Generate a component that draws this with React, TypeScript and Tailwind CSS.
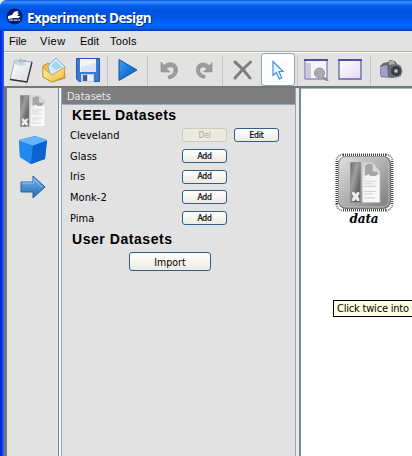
import type { ReactNode } from 'react';

function DatasetIcon({ className }: { className: string }) {
  return (
    <svg viewBox="0 0 26 32" className={className} preserveAspectRatio="none">
      <defs>
        <linearGradient id="strip" x1="0" y1="0" x2="1" y2="1">
          <stop offset="0" stopColor="#6c6c6c" />
          <stop offset=".35" stopColor="#a0a0a0" />
          <stop offset=".7" stopColor="#666" />
          <stop offset="1" stopColor="#777" />
        </linearGradient>
        <linearGradient id="sheet" x1="0" y1="0" x2=".6" y2="1">
          <stop offset="0" stopColor="#cfcfcf" />
          <stop offset=".4" stopColor="#f2f2f2" />
          <stop offset="1" stopColor="#fafafa" />
        </linearGradient>
      </defs>
      <rect x=".5" y=".5" width="8.5" height="31" fill="url(#strip)" stroke="#8c8c8c" strokeWidth=".6" />
      <path d="M1.800 23.500h1.700l1.300 1.500 1.300-1.500h1.700v1.800l-1.200 1.500 1.200 1.700v2H6.100l-1.300-1.500-1.300 1.500H1.800v-2L3 26.800l-1.200-1.500z" fill="#eee" />
      <path d="M10.500 .5H19l6 7v24H10.500z" fill="url(#sheet)" stroke="#d5d5d5" strokeWidth=".5" />
      <path d="M12.500 3q4-3 6.500-1l1 5 4.500 1.500-3 2.500h-4l-2-1.500-3 1.500z" fill="#a6a6a6" />
      <path d="M19 .5v7h6z" fill="#dcdcdc" stroke="#b5b5b5" strokeWidth=".4" />
      <path d="M12 15h10M12 17h7M12 19h10M12 23h10M12 25h7M12 28h9" stroke="#d2d2d2" strokeWidth=".9" />
    </svg>
  );
}

function Sep({ className }: { className: string }) {
  return (
    <div className={`flex h-full shrink-0 justify-center ${className}`}>
      <div className="mt-[3px] h-[30px] w-px bg-[#c9c6b8]" />
    </div>
  );
}

function Cell({ className, children }: { className: string; children: ReactNode }) {
  return <div className={`flex h-full shrink-0 items-center justify-center ${className}`}>{children}</div>;
}

function Toolbar() {
  return (
    <div className="flex h-[34px] w-full shrink-0 items-center overflow-hidden border-t border-white bg-[#e2e2e2]">
      <Cell className="w-[33px]">
        <svg width="26" height="26" viewBox="0 0 26 26">
          <defs>
            <linearGradient id="pg" x1="0" y1="0" x2="1" y2="1"><stop stopColor="#fff" /><stop offset="1" stopColor="#d8dbe0" /></linearGradient>
          </defs>
          <path d="M7 3l17 2-5 20L2 22z" fill="url(#pg)" stroke="#aaa" />
          <path d="M24 5l-5 20L2 22.500" fill="none" stroke="#333" strokeWidth="1.300" />
          <path d="M7 3l9 1 2 4-6 1-5-2z" fill="#c5d9e8" />
          <path d="M12 1l2 3 4 0M10 3l3 3" stroke="#86a6bf" fill="none" />
        </svg>
      </Cell>
      <Cell className="w-[33px]">
        <svg width="26" height="26" viewBox="0 0 26 26">
          <defs>
            <linearGradient id="fold" x1="0" y1="0" x2="1" y2="1"><stop stopColor="#fff6ac" /><stop offset="1" stopColor="#eeb83a" /></linearGradient>
          </defs>
          <path d="M2 9l5-3 4 3 12 1 1 11-13 4-9-5z" fill="#eec04a" stroke="#b98a22" />
          <path d="M7 9l8-8 9 9-7 10-8-3z" fill="#d3edfa" stroke="#79b4d5" />
          <path d="M10 9l5-5 6 6-6 3z" fill="#a3d5ef" />
          <path d="M2 11l9 7 13-8-1 10-12 5-9-5z" fill="url(#fold)" stroke="#c9962a" strokeWidth=".8" />
        </svg>
      </Cell>
      <Cell className="w-[35px]">
        <svg width="24" height="24" viewBox="0 0 24 24">
          <path d="M.500.500h23v23H3l-2.500-2.500z" fill="#3d78d3" stroke="#2458ab" />
          <path d="M4 1h16v13H4z" fill="#f3f5fb" />
          <path d="M5 9l15-4v9H5z" fill="#dce2f1" />
          <path d="M5 16h13v8H5z" fill="#c7d0e0" />
          <path d="M7 17h4v6H7z" fill="#345e9d" />
          <path d="M12 17h5v6h-5z" fill="#eef0f5" />
        </svg>
      </Cell>
      <Sep className="w-[4px]" />
      <Cell className="w-[37px]">
        <svg width="20" height="24" viewBox="0 0 20 24">
          <defs>
            <linearGradient id="play" x1="0" y1="0" x2="1" y2="1"><stop stopColor="#4b9bec" /><stop offset=".5" stopColor="#1c78dc" /><stop offset="1" stopColor="#0c59b8" /></linearGradient>
          </defs>
          <path d="M1 1.500v21L19 12z" fill="url(#play)" stroke="#14559e" strokeLinejoin="round" />
        </svg>
      </Cell>
      <Sep className="mr-[4px] w-[3px]" />
      <Cell className="w-[34px]">
        <svg width="20" height="20" viewBox="0 0 20 20">
          <path d="M1 2l3 3.500C9 0 18 3 17.500 10c0 5-4 8-8.500 9l-1-3c4-1 6-3 6-6 0-4-5-4-7.500-1.500L10 12H1z" fill="#9c9c9c" stroke="#8a8a8a" strokeWidth=".6" />
        </svg>
      </Cell>
      <Cell className="w-[32px]">
        <svg width="19" height="20" viewBox="0 0 20 20">
          <path d="M19 2l-3 3.500C11 0 2 3 2.500 10c0 5 4 8 8.500 9l1-3c-4-1-6-3-6-6 0-4 5-4 7.500-1.500L10 12h9z" fill="#9c9c9c" stroke="#8a8a8a" strokeWidth=".6" />
        </svg>
      </Cell>
      <Sep className="w-[6px]" />
      <Cell className="w-[36px]">
        <svg width="20" height="20" viewBox="0 0 20 20">
          <path d="M2 2c5 4 10 9 15 16M17.500 2C12 7 7 12 2 18" fill="none" stroke="#7e7e7e" strokeWidth="3" strokeLinecap="round" />
        </svg>
      </Cell>
      <div className="flex h-[33px] w-[34px] shrink-0 items-center justify-center rounded-[3px] border border-[#88a9ac] bg-white">
        <svg width="14" height="21" viewBox="0 0 14 21" className="-ml-px mt-[2px]">
          <path d="M2 1.500v14l3.300-3 3 6.500 2.500-1.200-3-6.300H12z" fill="#eef7ff" stroke="#4290dc" strokeWidth="1.200" />
        </svg>
      </div>
      <Sep className="w-[5px]" />
      <Cell className="w-[33px]">
        <svg width="25" height="22" viewBox="0 0 25 22">
          <path d="M1 1h22v19H1z" fill="#f5f2fa" stroke="#6462ab" />
          <path d="M0 0h24v2H0z" fill="#4e4da5" />
          <path d="M2 4h5v15H2z" fill="#cbcbd5" />
          <circle cx="15.500" cy="14" r="5" fill="#aaa9ae" stroke="#929299" />
          <path d="M19 18l5 4" stroke="#858585" strokeWidth="2" />
        </svg>
      </Cell>
      <Cell className="w-[33px]">
        <svg width="24" height="21" viewBox="0 0 24 21">
          <defs>
            <linearGradient id="win" x1="0" y1="0" x2="1" y2="1"><stop stopColor="#fff" /><stop offset="1" stopColor="#e5d9ee" /></linearGradient>
          </defs>
          <path d="M1 1h22v19H1z" fill="url(#win)" stroke="#6462ab" strokeWidth="1.300" />
          <path d="M0 0h24v2H0z" fill="#4e4da5" />
        </svg>
      </Cell>
      <Sep className="w-[8px]" />
      <Cell className="w-[34px]">
        <svg width="24" height="19" viewBox="0 0 24 19">
          <path d="M1 6l3-3 5-1 2-2 5 1 2 3 4 2v10l-8 2-12-1-1-4z" fill="#676771" />
          <path d="M1 7l7-2 1 12-7-1z" fill="#a3a0cc" />
          <path d="M10 1h5l1 3-6 1z" fill="#aaa" />
          <circle cx="17" cy="11" r="6" fill="#454550" stroke="#858590" />
          <circle cx="17" cy="11" r="3" fill="#8181a0" stroke="#252532" />
          <circle cx="17" cy="11" r="1" fill="#e5e5ee" />
        </svg>
      </Cell>
    </div>
  );
}

const rows = ['Cleveland', 'Glass', 'Iris', 'Monk-2', 'Pima'];

function SmallButton({ label, disabled = false }: { label: string; disabled?: boolean }) {
  const look = disabled
    ? 'border-[#cdccbd] bg-[#ebebe2] text-[#aaa99a]'
    : 'border-[#315f88] bg-gradient-to-b from-white to-[#eceae2] text-black';
  return (
    <button className={`h-[14px] w-[45px] rounded-[3px] border text-center font-['DejaVu_Sans_Condensed',sans-serif] text-[8.500px] leading-[11px] tracking-[-0.2px] ${disabled ? '' : '[-webkit-text-stroke:0.2px_black]'} ${look}`}>
      {label}
    </button>
  );
}

function DataNode() {
  return (
    <div className="flex w-[60px] flex-col items-center">
      <div className="relative h-[59px] w-[59px]">
        <svg width="59" height="59" viewBox="0 0 59 59" className="absolute inset-0">
          <defs>
            <linearGradient id="chip" x1="0" y1="0" x2="1" y2="1"><stop stopColor="#e0e0e0" /><stop offset=".5" stopColor="#b0b0b0" /><stop offset="1" stopColor="#7c7c7c" /></linearGradient>
          </defs>
          <path d="M8 2h43M8 57h43M2 8v43M57 8v43" stroke="#444" strokeWidth="3" strokeDasharray="1 1" />
          <path d="M8 1.500Q2 2 1.500 8M51 1.500Q57 2 57.500 8M1.500 51q.5 6 6.500 6.500M51 57.500q6-.5 6.500-6.500" fill="none" stroke="#777" strokeWidth="2" strokeDasharray="1 1" />
          <rect x="3" y="3" width="53" height="53" rx="8" fill="#777" />
          <rect x="4" y="4" width="50" height="50" rx="7" fill="url(#chip)" stroke="#c4c4c4" />
        </svg>
        <DatasetIcon className="absolute left-[15px] top-[9px] h-[41px] w-[31px]" />
      </div>
      <div className="font-['DejaVu_Serif',serif] text-[12px] font-bold italic leading-[15px] tracking-[-0.1px]">data</div>
    </div>
  );
}

export default function App() {
  return (
    <div className="h-[456px] w-[412px] overflow-hidden bg-[#dcecf7] font-['DejaVu_Sans_Condensed','DejaVu_Sans',sans-serif] text-black">
      <div className="flex h-full flex-col overflow-hidden rounded-tl-[7px] bg-[linear-gradient(90deg,#001fd0_0px,#0030e5_2px,#286bf0_3px,#0758e6_4px)]">
        <header className="flex h-[31px] shrink-0 items-center bg-[linear-gradient(180deg,#0754d5_0px,#3a93ff_2px,#0863ee_5px,#0052df_10px,#0055e5_17px,#0066ff_25px,#0060f6_28px,#003db5_31px)] pl-[6px] pt-[3px]">
          <svg width="17" height="17" viewBox="0 0 17 17" className="-mt-[2px] shrink-0">
            <circle cx="8.500" cy="8.500" r="8" fill="#091b68" />
            <path d="M2 8l4-1 2-3 3-1 2 1-2 1 2 1-2 2h3l-1 2-5 0-6 1z" fill="#fff" />
            <path d="M3 12.200h11" stroke="#bcccf3" strokeWidth="1.300" strokeDasharray="4 .7" />
          </svg>
          <h1 className="ml-[4px] mt-px whitespace-nowrap font-['Open_Sans',sans-serif] text-[13.500px] font-bold leading-[18px] tracking-[-0.53px] text-white [text-shadow:1px_1px_1px_#002477]">Experiments Design</h1>
        </header>
        <div className="ml-[4px] flex min-h-0 flex-1 flex-col bg-[#e2e2e2]">
          <nav className="flex h-[21px] shrink-0 border-b border-[#b2b09f] pt-[2px] font-['Liberation_Sans',sans-serif] text-[11px] leading-[16px]">
            <span className="ml-[5px] w-[31px]">File</span>
            <span className="w-[40px] tracking-[0.5px]">View</span>
            <span className="w-[30px]">Edit</span>
            <span className="tracking-[0.2px]">Tools</span>
          </nav>
          <Toolbar />
          <div className="flex min-h-0 flex-1 border-t-2 border-[#77776f]">
            <aside className="flex w-[54px] shrink-0 flex-col items-center border-l-[3px] border-[#777] bg-[#e2e2e2] pt-[7px]">
              <DatasetIcon className="h-[32px] w-[26px]" />
              <svg width="30" height="30" viewBox="0 0 30 30" className="mt-[8px]">
                <path d="M1 5L17 1l12 4-2 19-14 5L2 22z" fill="#1476e0" />
                <path d="M1 5L17 1l12 4-14 5z" fill="#65b4fa" />
                <path d="M1 5l14 5-2 19-11-7z" fill="#218af0" />
                <path d="M15 10l14-5-2 19-14 5z" fill="#0962cf" />
                <path d="M1 5l14 5 14-5" fill="none" stroke="#91cdff" strokeWidth=".7" />
              </svg>
              <svg width="28" height="24" viewBox="0 0 28 24" className="ml-px mt-[10px]">
                <defs>
                  <linearGradient id="arrow" x1="0" y1="0" x2="0" y2="1"><stop stopColor="#76b6ee" /><stop offset="1" stopColor="#2467b5" /></linearGradient>
                </defs>
                <path d="M2 7h12V1l12 11-12 11v-6H2z" fill="url(#arrow)" stroke="#28629f" />
                <path d="M3 8h12V4l8 8" fill="none" stroke="#92c8f4" />
              </svg>
            </aside>
            <div className="w-[4px] shrink-0 border-x border-l-[#858585] border-r-[#86a9c3] bg-[#f8f8f8]" />
            <main className="w-[233px] shrink-0 bg-[#e2e2e2]">
              <div className="h-[17px] border-b border-[#98abbd] bg-[#7e7e7e] pl-[5px] text-[11px] leading-[18px] tracking-[0px] text-[#e9e9e9]">Datasets</div>
              <h2 className="ml-[10px] whitespace-nowrap font-['Liberation_Sans',sans-serif] text-[14px] font-bold leading-[20px] tracking-[0.4px]">KEEL Datasets</h2>
              <div className="flex flex-col">
                {rows.map((name, i) => (
                  <div key={name} className="flex h-[20.700px] items-center pl-[8px]">
                    <span className="w-[112px] pt-px text-[11px] leading-[14px] tracking-[0.05px]">{name}</span>
                    <SmallButton label={i === 0 ? 'Del' : 'Add'} disabled={i === 0} />
                    {i === 0 && <div className="ml-[7px] flex"><SmallButton label="Edit" /></div>}
                  </div>
                ))}
              </div>
              <h2 className="ml-[10px] whitespace-nowrap font-['Liberation_Sans',sans-serif] text-[14px] font-bold leading-[22px] tracking-[0.55px]">User Datasets</h2>
              <button className="ml-[67px] mt-[2px] block h-[19px] w-[82px] rounded-[3px] border border-[#315f88] bg-gradient-to-b from-white to-[#eceae2] pt-px text-[10.500px] leading-[16px]">Import</button>
            </main>
            <div className="w-[6px] shrink-0 border-l border-r-2 border-l-[#86a9c3] border-r-[#718b98] bg-[#eee9dd]" />
            <section className="min-w-0 flex-1 overflow-hidden border-t border-[#9fbacb] bg-white pt-[64px]">
              <div className="ml-[33px]"><DataNode /></div>
              <div className="ml-[32px] mt-[73px] h-[17px] w-[110px] whitespace-nowrap border border-black bg-[#ffffe1] pl-[3px] text-[11px] leading-[16px] tracking-[-0.2px]">Click twice into</div>
            </section>
          </div>
        </div>
      </div>
    </div>
  );
}
